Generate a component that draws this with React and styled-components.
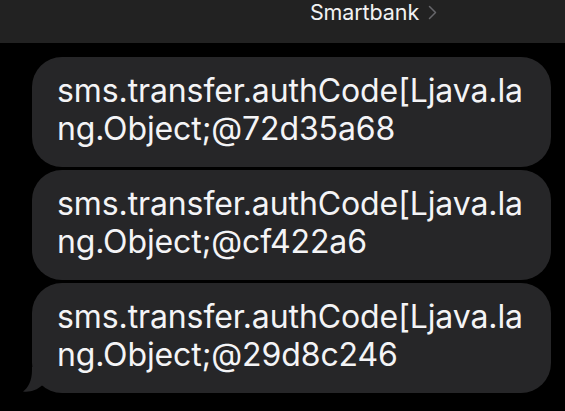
import React from 'react';
import styled, {createGlobalStyle} from "styled-components";

const GlobalStyle = createGlobalStyle`
  html, body {
    margin: 0;
    padding: 0;
    background: #000;
  }
  body {
    font-family: Inter, "Liberation Sans", Roboto, sans-serif;
    -webkit-font-smoothing: antialiased;
  }
`;

const messages = [
    ['sms.transfer.authCode[Ljava.la', 'ng.Object;@72d35a68'],
    ['sms.transfer.authCode[Ljava.la', 'ng.Object;@cf422a6'],
    ['sms.transfer.authCode[Ljava.la', 'ng.Object;@29d8c246'],
];

const App = () => {
    return (
        <>
            <GlobalStyle/>
            <Screen>
                <Header>
                    <Contact>
                        Smartbank
                        <Chevron viewBox="0 0 9 15">
                            <path d="M1.5 1.5 L7.5 7.5 L1.5 13.5" fill="none" stroke="#66666a" strokeWidth="1.5"
                                  strokeLinecap="round" strokeLinejoin="round"/>
                        </Chevron>
                    </Contact>
                </Header>
                <Thread>
                    {messages.map((lines, i) => (
                        <Bubble key={i}>
                            {i === messages.length - 1 && (
                                <Tail viewBox="0 0 30 26">
                                    <path d="M10 0 L10 3 C10 14 6 21 1 24.5 C8 25.5 15 23 20 18.5 L30 18.5 L30 0 Z"
                                          fill="#262628"/>
                                </Tail>
                            )}
                            {lines.map((line, j) => <Line key={j}>{line}</Line>)}
                        </Bubble>
                    ))}
                </Thread>
            </Screen>
        </>
    );
};

const Screen = styled.div`
  width: 565px;
  height: 411px;
  background: #000;
  overflow: hidden;
`;

const Header = styled.div`
  height: 43px;
  background: #222222;
  display: flex;
  justify-content: center;
  padding-left: 182px;
  box-sizing: border-box;
`;

const Contact = styled.div`
  display: flex;
  align-items: flex-start;
  gap: 9px;
  color: #f2f2f2;
  font-size: 21.5px;
  line-height: 24px;
  letter-spacing: -0.1px;
`;

const Chevron = styled.svg`
  width: 9px;
  height: 15px;
  margin-top: 5px;
`;

const Thread = styled.div`
  display: flex;
  flex-direction: column;
  gap: 3px;
  padding: 14px 14px 0 32px;
`;

const Bubble = styled.div`
  position: relative;
  background: #262628;
  border-radius: 30px;
  height: 110px;
  box-sizing: border-box;
  padding: 15px 0 0 25px;
  color: #f4f4f6;
  font-size: 32px;
  line-height: 38px;
  letter-spacing: -0.1px;
`;

const Tail = styled.svg`
  position: absolute;
  left: -10px;
  bottom: 0;
  width: 30px;
  height: 26px;
`;

const Line = styled.div`
  white-space: nowrap;
  position: relative;
`;

export default App;
